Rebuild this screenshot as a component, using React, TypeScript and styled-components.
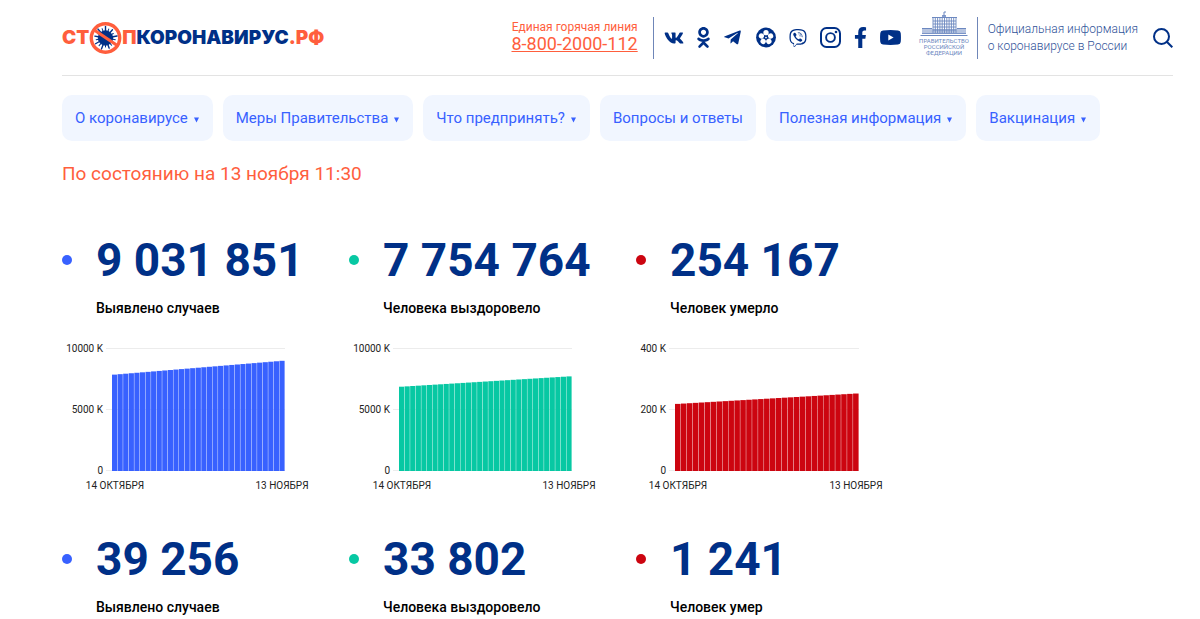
import React from 'react';
import styled, { createGlobalStyle } from 'styled-components';
import { FaFacebookF, FaOdnoklassniki, FaTelegramPlane, FaViber, FaVk } from 'react-icons/fa';

const navy = '#003087';
const coral = '#ff5e3d';
const blue = '#3861ff';
const green = '#07c8a3';
const red = '#cc0510';

const GlobalStyle = createGlobalStyle`
  *, *::before, *::after { box-sizing: border-box; }
  body {
    margin: 0;
    background: #fff;
    color: #000;
    font-family: Roboto, "Liberation Sans", sans-serif;
  }
`;

const Page = styled.div`
  padding: 0 27px 0 62px;
`;

const Header = styled.header`
  display: flex;
  align-items: center;
  height: 76px;
  border-bottom: 1px solid #e3e3e3;
`;

const LogoLink = styled.a`
  display: flex;
  align-items: center;
  color: ${coral};
  font: 900 19px/32px Inter, "Open Sans", sans-serif;
  text-decoration: none;
`;

const LogoDark = styled.span`
  color: ${navy};
`;

const HeaderSide = styled.div`
  display: flex;
  align-items: center;
  margin-left: auto;
`;

const Hotline = styled.div`
  display: flex;
  flex-direction: column;
  align-items: flex-end;
  margin: 0 15px 3px 0;
  color: ${coral};
  font-size: 12px;
  line-height: 16px;
`;

const Phone = styled.a`
  color: inherit;
  font-size: 18px;
  line-height: 18px;
`;

const Divider = styled.span`
  width: 1px;
  height: 42px;
  background: #6f86b8;
`;

const Socials = styled.nav`
  display: flex;
  align-items: center;
  gap: 13px;
  margin: 0 19px 0 10px;
`;

const SocialLink = styled.a<{ $width: number }>`
  display: flex;
  justify-content: center;
  width: ${(p) => p.$width}px;
  color: ${navy};
`;

const GovLink = styled.a`
  display: flex;
  margin: 0 9px 8px 0;
`;

const Official = styled.p`
  margin: 0 0 0 10px;
  color: #315399;
  font-size: 12px;
  font-weight: 300;
  line-height: 17px;
`;

const SearchButton = styled.button`
  display: flex;
  margin-left: 15px;
  padding: 0;
  border: 0;
  background: none;
  color: ${navy};
  cursor: pointer;
`;

const Menu = styled.nav`
  display: flex;
  flex-wrap: wrap;
  gap: 10px;
  margin-top: 19px;
`;

const MenuButton = styled.button`
  display: flex;
  align-items: center;
  gap: 5px;
  height: 46px;
  padding: 0 13px;
  border: 0;
  border-radius: 10px;
  background: #f1f6ff;
  color: ${blue};
  font: 400 15px/20px Roboto, sans-serif;
  text-decoration: none;
  cursor: pointer;
`;

const Caret = styled.svg`
  margin-top: 4px;
  fill: currentColor;
`;

const Status = styled.h1`
  margin: 21px 0 0;
  color: ${coral};
  font-size: 19px;
  font-weight: 400;
  line-height: 24px;
`;

const Stats = styled.main`
  display: grid;
  grid-template-columns: repeat(auto-fill, 287px);
  margin-top: 44px;
`;

const Stat = styled.section`
  display: grid;
  grid-template-columns: 10px 1fr;
  column-gap: 24px;
  align-items: center;
`;

const Dot = styled.span<{ $color: string }>`
  height: 10px;
  border-radius: 50%;
  background: ${(p) => p.$color};
`;

const Value = styled.strong`
  color: ${navy};
  font-size: 46px;
  font-weight: 700;
  line-height: 60px;
`;

const Label = styled.span`
  grid-column: 2;
  margin-top: 8px;
  font-size: 14px;
  font-weight: 500;
  line-height: 20px;
`;

const ChartSvg = styled.svg`
  grid-column: 1 / -1;
  display: block;
  margin: 22px 0 37px;
  fill: #222;
  font-family: Roboto, sans-serif;
  font-size: 10px;
  overflow: visible;
`;

function Virus() {
  const spikes = Array.from({ length: 18 }, (_, i) => i * 20);
  const reach = [4.5, 6.5, 5.2, 7, 4.2, 6];
  return (
    <svg width="33" height="32" viewBox="0 0 33 32" aria-hidden="true">
      <g stroke={navy} fill={navy} strokeLinecap="round">
        <circle cx="16.5" cy="16" r="7.2" />
        {spikes.map((a, i) => (
          <path
            key={a}
            d={`M16.5 10V${reach[i % reach.length]}`}
            strokeWidth={i % 2 ? 1 : 1.4}
            transform={`rotate(${a} 16.5 16)`}
          />
        ))}
      </g>
      <g fill="none" stroke={coral}>
        <path d="M6 8.5L27.5 23" strokeWidth="3.2" />
        <circle cx="16.5" cy="16" r="14.2" strokeWidth="3.4" />
      </g>
    </svg>
  );
}

function Reel() {
  const petals = [0, 72, 144, 216, 288];
  return (
    <svg width="21" height="21" viewBox="0 0 21 21" aria-hidden="true">
      <circle cx="10.5" cy="10.5" r="10.4" fill="currentColor" />
      {petals.map((a) => (
        <circle key={a} cx="10.5" cy="5.4" r="2.8" fill="#fff" transform={`rotate(${a} 10.5 10.5)`} />
      ))}
      <circle cx="10.5" cy="10.5" r="0.9" fill="#fff" />
    </svg>
  );
}

function Instagram() {
  return (
    <svg width="21" height="21" viewBox="0 0 21 21" fill="none" stroke="currentColor" aria-hidden="true">
      <rect x="1" y="1" width="19" height="19" rx="5.5" strokeWidth="2" />
      <circle cx="10.5" cy="10.5" r="4.4" strokeWidth="1.9" />
      <circle cx="16" cy="5" r="1.3" fill="currentColor" stroke="none" />
    </svg>
  );
}

function Youtube() {
  return (
    <svg width="21" height="15" viewBox="0 0 21 15" aria-hidden="true">
      <path
        fill="currentColor"
        d="M3 .4Q10.5-.3 18 .4Q20.5.7 20.7 3Q21.2 7.5 20.7 12Q20.5 14.3 18 14.6Q10.5 15.3 3 14.6Q.5 14.3.3 12Q-.2 7.5.3 3Q.5.7 3 .4Z"
      />
      <path fill="#fff" d="M8.3 4.4L13.6 7.5L8.3 10.6Z" />
    </svg>
  );
}

const GovSvg = styled.svg`
  overflow: visible;
`;

function Government() {
  const row = (from: number, to: number, step: number) =>
    Array.from({ length: Math.floor((to - from) / step) + 1 }, (_, i) => from + i * step);
  return (
    <GovSvg width="48" height="46" viewBox="0 0 48 46" role="img" aria-label="Правительство Российской Федерации">
      <g fill="none" stroke="#6c88c0">
        <path d="M24 5V1M24 1h2" strokeWidth="1" />
        <path d="M22 5h4" strokeWidth="1.6" />
        <path d="M12 6.5h25M0.5 24.5h47M2 17.5h10M37 17.5h9" strokeWidth="1" />
        <path d="M13 10h23M13 13h23M13 16h23M13 19h23" strokeWidth="0.9" />
        {row(13, 36, 2.3).map((x) => (
          <path key={x} d={`M${x} 7V22`} strokeWidth="0.9" />
        ))}
        {row(3, 46, 2).map((x) => (
          <path key={x} d={`M${x} 18V23`} strokeWidth="1" />
        ))}
        <path d="M2 22.5h44" strokeWidth="0.8" />
      </g>
      <g fill="#6c88c0" fontFamily="Roboto, sans-serif" fontSize="6" textAnchor="middle">
        <text x="24" y="32">ПРАВИТЕЛЬСТВО</text>
        <text x="24" y="38">РОССИЙСКОЙ</text>
        <text x="24" y="44">ФЕДЕРАЦИИ</text>
      </g>
    </GovSvg>
  );
}

type ChartData = { first: number; last: number; max: number; left: number };

const DAYS = 31;

function Chart({ first, last, max, left, color }: ChartData & { color: string }) {
  const right = 223;
  const base = 131;
  const plot = 122;
  const step = (right - left) / DAYS;
  const bars = Array.from({ length: DAYS }, (_, i) => {
    const value = first + ((last - first) * i) / (DAYS - 1);
    return { x: left + i * step, height: (value / max) * plot };
  });
  return (
    <ChartSvg width="250" height="152" viewBox="0 0 250 152" role="img" aria-label="График по дням">
      {[0, max / 2, max].map((tick) => {
        const y = base - (tick / max) * plot;
        return (
          <g key={tick}>
            <path d={`M${left - 6} ${y - 0.5}H${right}`} stroke="#ececec" />
            <text x={left - 9} y={y + 3} textAnchor="end">
              {tick ? `${tick} K` : '0'}
            </text>
          </g>
        );
      })}
      {bars.map((bar) => (
        <rect key={bar.x} x={bar.x} y={base - bar.height} width={step - 0.4} height={bar.height} fill={color} />
      ))}
      <text x={left + 3} y="149" textAnchor="middle">14 ОКТЯБРЯ</text>
      <text x={right - 3} y="149" textAnchor="middle">13 НОЯБРЯ</text>
    </ChartSvg>
  );
}

const socials = [
  { name: 'ВКонтакте', width: 20, icon: <FaVk size={20} /> },
  { name: 'Одноклассники', width: 13, icon: <FaOdnoklassniki size={21} /> },
  { name: 'Telegram', width: 20, icon: <FaTelegramPlane size={19} /> },
  { name: 'Видео', width: 20, icon: <Reel /> },
  { name: 'Viber', width: 18, icon: <FaViber size={22} /> },
  { name: 'Instagram', width: 21, icon: <Instagram /> },
  { name: 'Facebook', width: 13, icon: <FaFacebookF size={21} /> },
  { name: 'YouTube', width: 21, icon: <Youtube /> },
];

const menu = [
  { title: 'О коронавирусе', sub: true },
  { title: 'Меры Правительства', sub: true },
  { title: 'Что предпринять?', sub: true },
  { title: 'Вопросы и ответы', sub: false },
  { title: 'Полезная информация', sub: true },
  { title: 'Вакцинация', sub: true },
];

const stats: { value: string; label: string; color: string; chart?: ChartData }[] = [
  { value: '9 031 851', label: 'Выявлено случаев', color: blue, chart: { first: 7900, last: 9032, max: 10000, left: 50 } },
  { value: '7 754 764', label: 'Человека выздоровело', color: green, chart: { first: 6910, last: 7755, max: 10000, left: 50 } },
  { value: '254 167', label: 'Человек умерло', color: red, chart: { first: 220, last: 254, max: 400, left: 39 } },
  { value: '39 256', label: 'Выявлено случаев', color: blue },
  { value: '33 802', label: 'Человека выздоровело', color: green },
  { value: '1 241', label: 'Человек умер', color: red },
];

export default function App() {
  return (
    <>
      <GlobalStyle />
      <Page>
        <Header>
          <LogoLink href="#">
            СТ
            <Virus />
            П<LogoDark>КОРОНАВИРУС</LogoDark>.РФ
          </LogoLink>
          <HeaderSide>
            <Hotline>
              Единая горячая линия
              <Phone href="tel:88002000112">8-800-2000-112</Phone>
            </Hotline>
            <Divider />
            <Socials aria-label="Социальные сети">
              {socials.map((s) => (
                <SocialLink key={s.name} href="#" aria-label={s.name} $width={s.width}>
                  {s.icon}
                </SocialLink>
              ))}
            </Socials>
            <GovLink href="#">
              <Government />
            </GovLink>
            <Divider />
            <Official>
              Официальная информация
              <br />о коронавирусе в России
            </Official>
            <SearchButton type="button" aria-label="Поиск">
              <svg width="20" height="20" viewBox="0 0 20 20" fill="none" stroke="currentColor" strokeWidth="2">
                <circle cx="8.5" cy="8.5" r="7.5" />
                <path d="M13.8 13.8L19.3 19.3" />
              </svg>
            </SearchButton>
          </HeaderSide>
        </Header>
        <Menu aria-label="Разделы">
          {menu.map((m) =>
            m.sub ? (
              <MenuButton key={m.title} type="button">
                {m.title}
                <Caret width="7" height="6" viewBox="0 0 7 6" aria-hidden="true">
                  <path d="M1 0.5H6L3.5 5.5Z" />
                </Caret>
              </MenuButton>
            ) : (
              <MenuButton key={m.title} as="a" href="#">
                {m.title}
              </MenuButton>
            ),
          )}
        </Menu>
        <Status>По состоянию на 13 ноября 11:30</Status>
        <Stats>
          {stats.map((s) => (
            <Stat key={s.value}>
              <Dot $color={s.color} />
              <Value>{s.value}</Value>
              <Label>{s.label}</Label>
              {s.chart && <Chart {...s.chart} color={s.color} />}
            </Stat>
          ))}
        </Stats>
      </Page>
    </>
  );
}
